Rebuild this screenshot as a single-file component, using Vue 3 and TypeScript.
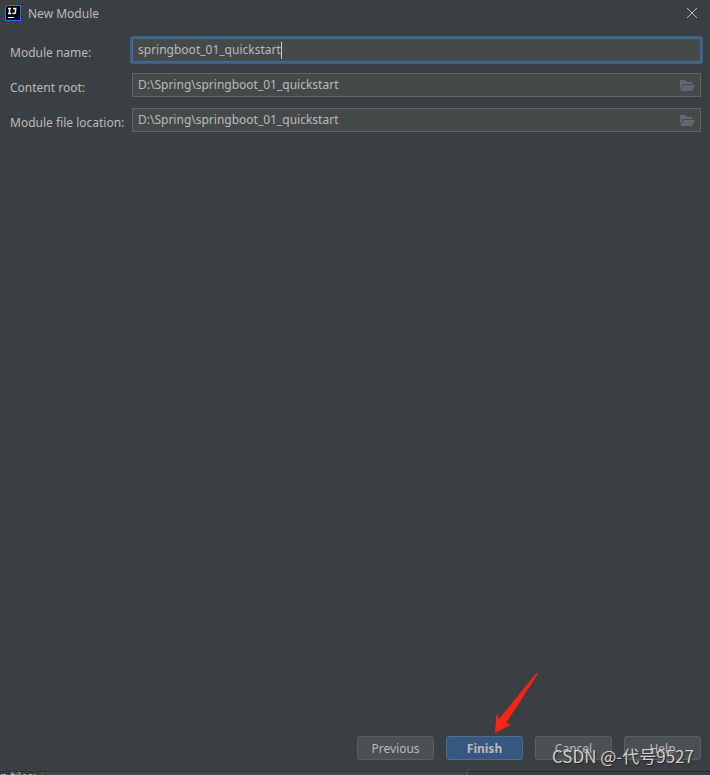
<script setup lang="ts">
import { ref } from 'vue'

const moduleName = ref('springboot_01_quickstart')
const contentRoot = ref('D:\\Spring\\springboot_01_quickstart')
const fileLocation = ref('D:\\Spring\\springboot_01_quickstart')
</script>

<template>
  <div class="window">
    <header class="titlebar">
      <svg class="logo" viewBox="0 0 16 16" aria-hidden="true">
        <rect width="16" height="16" fill="#087cfa" />
        <rect x="1" y="1" width="14" height="14" fill="#000" />
        <path d="M3 3.5h3M4.5 3.5v5M3 8.5h3M8 3.5h3.5M10.5 3.5V7q0 1.5-1.5 1.5H7.5" fill="none" stroke="#fff" stroke-width="1.4" />
        <rect x="3" y="12" width="6" height="1" fill="#fff" />
      </svg>
      <h1 class="title">New Module</h1>
      <button class="close" type="button" aria-label="Close">
        <svg viewBox="0 0 10 10" aria-hidden="true">
          <path d="M0 0L10 10M10 0L0 10" stroke="#bbb" stroke-width="1" />
        </svg>
      </button>
    </header>

    <form class="form" @submit.prevent>
      <label class="label" for="module-name">Module name:</label>
      <div class="field active">
        <input id="module-name" v-model="moduleName" type="text" spellcheck="false" />
        <span class="caret" aria-hidden="true">{{ moduleName }}</span>
      </div>

      <label class="label" for="content-root">Content root:</label>
      <div class="field">
        <input id="content-root" v-model="contentRoot" type="text" spellcheck="false" />
        <button class="browse" type="button" aria-label="Browse content root">
          <svg viewBox="0 0 15 11" aria-hidden="true">
            <path d="M0 10V0H5L7 2H12V4H3Z" fill="#626a6e" />
            <path d="M3.5 5H15L12 11H0.5Z" fill="#626a6e" />
          </svg>
        </button>
      </div>

      <label class="label" for="file-location">Module file location:</label>
      <div class="field">
        <input id="file-location" v-model="fileLocation" type="text" spellcheck="false" />
        <button class="browse" type="button" aria-label="Browse module file location">
          <svg viewBox="0 0 15 11" aria-hidden="true">
            <path d="M0 10V0H5L7 2H12V4H3Z" fill="#626a6e" />
            <path d="M3.5 5H15L12 11H0.5Z" fill="#626a6e" />
          </svg>
        </button>
      </div>
    </form>

    <footer class="actions">
      <button class="btn" type="button">Previous</button>
      <button class="btn primary" type="button">
        Finish
        <svg class="arrow" viewBox="0 0 44 60" aria-hidden="true">
          <path d="M42 0.5Q44 -0.5 43.5 1.5L12 50L17 51.5L1 60L2.5 41L5 46Z" fill="#ff2313" />
        </svg>
      </button>
      <button class="btn" type="button">Cancel</button>
      <button class="btn" type="button">Help</button>
    </footer>

    <div class="behind"><span class="behind-label">n files:</span><span class="behind-field"></span></div>
    <div class="watermark">CSDN @-代号9527</div>
  </div>
</template>

<style>
body {
  background: #3c3f41;
}
</style>

<style scoped>
.window {
  position: relative;
  display: flex;
  flex-direction: column;
  min-height: 100vh;
  background: #3c3f41;
  color: #bbb;
  font: 12px/18px "Noto Sans", "Open Sans", sans-serif;
}
.window * {
  box-sizing: border-box;
}
.titlebar {
  display: flex;
  align-items: center;
  height: 26px;
  padding: 0 13px 0 5px;
}
.logo {
  width: 16px;
  height: 16px;
}
.title {
  flex: 1;
  margin: 0 0 0 7px;
  padding-top: 2px;
  font-size: 12px;
  font-weight: 400;
}
.close {
  display: flex;
  padding: 0;
  border: 0;
  background: none;
}
.close svg {
  width: 10px;
  height: 10px;
}
.form {
  display: grid;
  grid-template-columns: 122px 1fr;
  row-gap: 11px;
  padding: 12px 9px 0 10px;
}
.label {
  padding-top: 6px;
  white-space: nowrap;
}
.field {
  position: relative;
  display: flex;
  height: 24px;
  border: 1px solid #646464;
  background: #45494a;
}
.field.active {
  border-color: #466d94;
  box-shadow: 0 0 0 2px #3d6185;
  border-radius: 1px;
}
.field input {
  flex: 1;
  min-width: 0;
  padding: 0 5px;
  border: 0;
  outline: 0;
  background: none;
  color: #bbb;
  font: inherit;
}
.caret {
  position: absolute;
  top: 3px;
  left: 5px;
  height: 17px;
  border-right: 1px solid #ccc;
  color: transparent;
  pointer-events: none;
}
.browse {
  display: flex;
  align-items: center;
  padding: 0 5px 0 0;
  border: 0;
  background: none;
}
.browse svg {
  width: 15px;
  height: 11px;
}
.actions {
  display: flex;
  justify-content: flex-end;
  gap: 12px;
  margin-top: auto;
  padding: 0 9px 11px;
}
.btn {
  position: relative;
  width: 77px;
  height: 24px;
  padding: 2px 0 0;
  border: 1px solid #5e6060;
  border-radius: 3px;
  background: #4c5052;
  color: #bbb;
  font: inherit;
}
.btn.primary {
  border-color: #4c708c;
  background: #365880;
  font-weight: 700;
}
.arrow {
  position: absolute;
  left: 47px;
  bottom: 26px;
  width: 44px;
  height: 60px;
}
.behind {
  display: flex;
  height: 4px;
  overflow: hidden;
  border-top: 1px solid #2f3132;
}
.behind-label {
  width: 41px;
  margin-top: -4px;
}
.behind-field {
  width: 427px;
  border: 1px solid #646464;
  border-top: 0;
  border-bottom: 0;
  background: #45494a;
}
.watermark {
  position: absolute;
  right: 16px;
  bottom: 7px;
  color: #d0d0d0;
  font: 17px/24px "Noto Sans CJK SC", sans-serif;
  text-shadow: 1px 1px 1px #222;
  pointer-events: none;
}
</style>
